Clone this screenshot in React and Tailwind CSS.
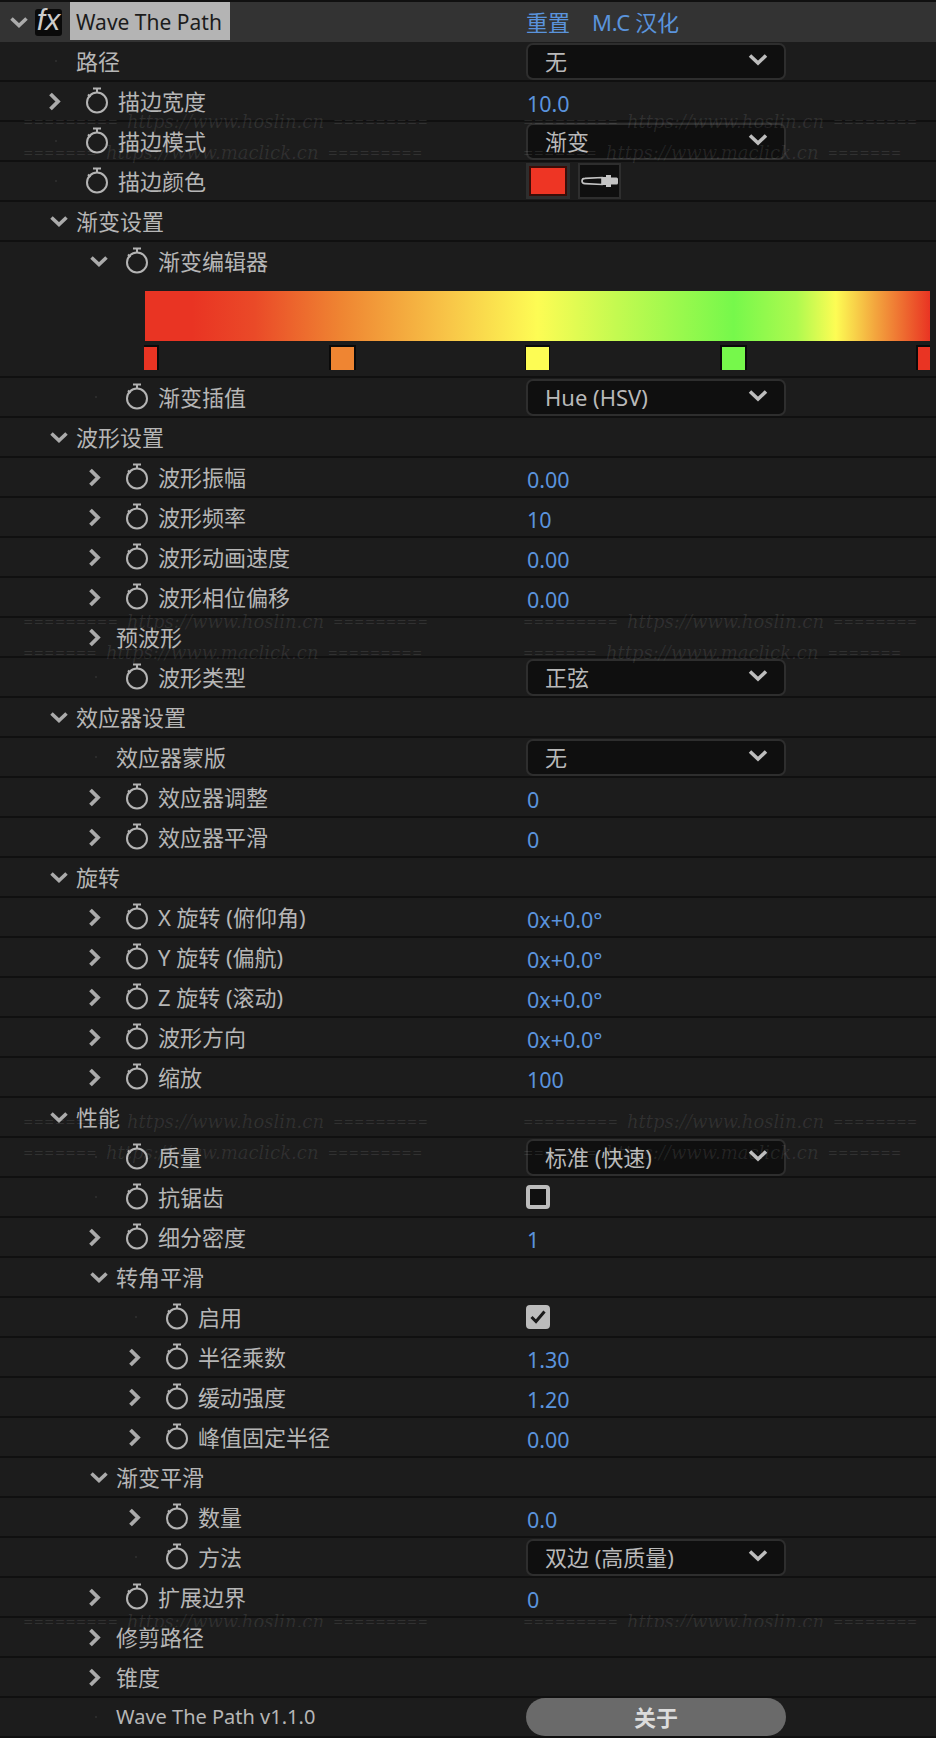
const FONT = "font-['Noto_Sans','Noto_Sans_CJK_SC',sans-serif]";

const Watch = () => (
  <svg width="24" height="28" viewBox="0 0 24 28" fill="none" stroke="#b4b4b4" strokeWidth="2" className="shrink-0">
    <circle cx="12" cy="16.5" r="10" />
    <path d="M8 2.5h8M12 2.5v4M3 8.5l2.5 2.5" />
  </svg>
);

const ChevDown = ({ big }) => (
  <svg width="20" height="13" viewBox="0 0 20 13" fill="none" stroke={big ? "#bdbdbd" : "#ababab"} strokeWidth="3.6">
    <path d={big ? "M2 2.5l8 7.5 8-7.5" : "M2.5 2.5l7.5 7 7.5-7"} />
  </svg>
);

const ChevRight = () => (
  <svg width="13" height="19" viewBox="0 0 13 19" fill="none" stroke="#ababab" strokeWidth="3.8">
    <path d="M2.5 2l7.5 7.5-7.5 7.5" />
  </svg>
);

const Slot = ({ chev }) => (
  <div className="w-[32px] shrink-0 flex items-center">
    {chev === "down" && <div className="ml-[5px]"><ChevDown /></div>}
    {chev === "right" && <div className="ml-[4px]"><ChevRight /></div>}
    {!chev && <div className="ml-[11px] w-[2px] h-[2px] bg-[#2b2b2b]" />}
  </div>
);

const Label = ({ level, chev, watch, small, children }) => {
  const pad = ["pl-[44px]", "pl-[84px]", "pl-[124px]"][level];
  return (
    <div className={`w-[526px] shrink-0 flex items-center ${pad}`}>
      <Slot chev={chev} />
      {watch && <div className="w-[42px] shrink-0 pl-[9px] flex items-center -mt-[3px]"><Watch /></div>}
      <span className={`${small ? "text-[20px]" : "text-[22px]"} leading-none text-[#b6b6b6] whitespace-nowrap`}>{children}</span>
    </div>
  );
};

const Row = ({ children }) => (
  <div className="h-[40px] flex items-center border-b-2 border-[#101010] bg-[#1c1c1c]">{children}</div>
);

const Value = ({ children }) => (
  <span className="pl-[1px] mt-[6px] text-[21.5px] leading-none text-[#5a93dc]">{children}</span>
);

const Select = ({ children }) => (
  <div className="w-[260px] h-[37px] flex items-center justify-between pl-[17px] pr-[16px] rounded-[7px] bg-[#0f0f0f] border-2 border-[#2e2e2e]">
    <span className="text-[22px] leading-none text-[#b9b9b9] whitespace-nowrap">{children}</span>
    <div className="-mt-[3px]"><ChevDown big /></div>
  </div>
);

const Check = ({ on }) => (
  <div className={`w-[24px] h-[24px] rounded-[4px] border-[4px] border-[#bcbcbc] flex items-center justify-center ${on ? "bg-[#bcbcbc]" : "bg-[#101010]"}`}>
    {on && (
      <svg width="16" height="14" viewBox="0 0 16 14" fill="none" stroke="#1a1a1a" strokeWidth="3">
        <path d="M1.5 7l4.5 4.5L14.5 1.5" />
      </svg>
    )}
  </div>
);

const Marker = ({ cls }) => <div className={`h-[25px] ${cls}`} />;

const WLine = ({ l, url, r, cls }) => (
  <div className={`h-[24px] flex items-center gap-[9px] whitespace-nowrap text-white/[0.09] italic font-['DejaVu_Serif',serif] ${cls || ""}`}>
    <span className="text-[12.6px] leading-none not-italic">{l}</span>
    <span className="text-[18px] leading-none">{url}</span>
    <span className="text-[12.6px] leading-none not-italic">{r}</span>
  </div>
);

const Watermark = ({ top, clip }) => (
  <>
    <div className={`absolute left-[23px] pointer-events-none ${top} ${clip ? "h-[17px] overflow-hidden" : ""}`}>
      <WLine l="=========" url="https://www.hoslin.cn" r="=========" />
      {!clip && <WLine cls="mt-[7px]" l="=======" url="https://www.maclick.cn" r="=========" />}
    </div>
    <div className={`absolute left-[523px] pointer-events-none ${top} ${clip ? "h-[17px] overflow-hidden" : ""}`}>
      <WLine l="=========" url="https://www.hoslin.cn" r="========" />
      {!clip && <WLine cls="mt-[7px]" l="=======" url="https://www.maclick.cn" r="=======" />}
    </div>
  </>
);

export default function App() {
  return (
    <div className={`relative w-[936px] h-[1738px] overflow-hidden bg-[#101010] pt-[2px] ${FONT}`}>
      <div className="h-[40px] flex items-center bg-[#333333]">
        <div className="w-[526px] shrink-0 flex items-center pl-[9px]">
          <ChevDown />
          <div className="ml-[6px] w-[27px] h-[27px] rounded-[3px] bg-[#0a0a0a] flex items-center justify-center">
            <span className="text-[30px] leading-none italic text-[#cccccc] font-['Liberation_Sans',sans-serif] font-light -mt-[4px]">fx</span>
          </div>
          <div className="ml-[8px] w-[160px] h-[38px] -mt-[2px] bg-[#b4b4b4] flex items-center pl-[6px] pt-[2px]">
            <span className="text-[21px] leading-none text-[#1c1c1c] whitespace-nowrap">Wave The Path</span>
          </div>
        </div>
        <span className="text-[22px] leading-none text-[#5a93dc]">重置</span>
        <span className="ml-[22px] text-[22px] leading-none tracking-[-0.3px] text-[#5a93dc]">M.C 汉化</span>
      </div>

      <Row><Label level={0}>路径</Label><Select>无</Select></Row>
      <Row><Label level={0} chev="right" watch>描边宽度</Label><Value>10.0</Value></Row>
      <Row><Label level={0} watch>描边模式</Label><Select>渐变</Select></Row>
      <Row>
        <Label level={0} watch>描边颜色</Label>
        <div className="w-[44px] h-[36px] bg-[#2e2e2e] p-[3px]">
          <div className="w-full h-full bg-[#ee3524] border-2 border-[#3a0d08]" />
        </div>
        <div className="ml-[8px] w-[43px] h-[36px] bg-[#0f0f0f] border-2 border-[#2e2e2e] flex items-center justify-center">
          <svg width="38" height="14" viewBox="0 0 38 14" fill="none">
            <path d="M1 7c0-1.6 1.5-2.6 3-2.6L21 3.5v7L4 9.6C2.5 9.6 1 8.6 1 7z" stroke="#c4c4c4" strokeWidth="1.6" />
            <path d="M21 3h4V1h5v2.5h5.5a1.5 1.5 0 0 1 1.5 1.5v4a1.5 1.5 0 0 1-1.5 1.5H30V13h-5v-2h-4z" fill="#c4c4c4" />
          </svg>
        </div>
      </Row>
      <Row><Label level={0} chev="down">渐变设置</Label></Row>

      <div className="h-[136px] border-b-2 border-[#101010] bg-[#1c1c1c]">
        <div className="h-[38px] flex items-center"><Label level={1} chev="down" watch>渐变编辑器</Label></div>
        <div className="ml-[145px] mt-[11px] w-[785px] h-[50px] bg-[linear-gradient(to_right,#e93423_0%,#e93423_6%,#ea4a28_14%,#ef8532_25%,#f8c748_39%,#fdfc54_50%,#c4fa50_60%,#76f84b_75%,#aefa4f_83%,#fdfc54_88%,#f3a63e_93%,#e93423_100%)]" />
        <div className="ml-[144px] mt-[4px] w-[786px] flex justify-between">
          <Marker cls="w-[15px] bg-[#e93423] border-t-2 border-r-2 border-[#0a0a0a]" />
          <Marker cls="w-[27px] bg-[#ef8532] border-2 border-b-0 border-[#0a0a0a]" />
          <Marker cls="w-[25px] bg-[#fdfc54] border-t-2 border-l border-r border-[#0a0a0a]" />
          <Marker cls="w-[27px] bg-[#76f84b] border-2 border-b-0 border-[#0a0a0a]" />
          <Marker cls="w-[14px] bg-[#e93423] border-t-2 border-l-2 border-[#0a0a0a]" />
        </div>
      </div>

      <Row><Label level={1} watch>渐变插值</Label><Select>Hue (HSV)</Select></Row>
      <Row><Label level={0} chev="down">波形设置</Label></Row>
      <Row><Label level={1} chev="right" watch>波形振幅</Label><Value>0.00</Value></Row>
      <Row><Label level={1} chev="right" watch>波形频率</Label><Value>10</Value></Row>
      <Row><Label level={1} chev="right" watch>波形动画速度</Label><Value>0.00</Value></Row>
      <Row><Label level={1} chev="right" watch>波形相位偏移</Label><Value>0.00</Value></Row>
      <Row><Label level={1} chev="right">预波形</Label></Row>
      <Row><Label level={1} watch>波形类型</Label><Select>正弦</Select></Row>
      <Row><Label level={0} chev="down">效应器设置</Label></Row>
      <Row><Label level={1}>效应器蒙版</Label><Select>无</Select></Row>
      <Row><Label level={1} chev="right" watch>效应器调整</Label><Value>0</Value></Row>
      <Row><Label level={1} chev="right" watch>效应器平滑</Label><Value>0</Value></Row>
      <Row><Label level={0} chev="down">旋转</Label></Row>
      <Row><Label level={1} chev="right" watch>X 旋转 (俯仰角)</Label><Value>0x+0.0°</Value></Row>
      <Row><Label level={1} chev="right" watch>Y 旋转 (偏航)</Label><Value>0x+0.0°</Value></Row>
      <Row><Label level={1} chev="right" watch>Z 旋转 (滚动)</Label><Value>0x+0.0°</Value></Row>
      <Row><Label level={1} chev="right" watch>波形方向</Label><Value>0x+0.0°</Value></Row>
      <Row><Label level={1} chev="right" watch>缩放</Label><Value>100</Value></Row>
      <Row><Label level={0} chev="down">性能</Label></Row>
      <Row><Label level={1} watch>质量</Label><Select>标准 (快速)</Select></Row>
      <Row><Label level={1} watch>抗锯齿</Label><Check /></Row>
      <Row><Label level={1} chev="right" watch>细分密度</Label><Value>1</Value></Row>
      <Row><Label level={1} chev="down">转角平滑</Label></Row>
      <Row><Label level={2} watch>启用</Label><Check on /></Row>
      <Row><Label level={2} chev="right" watch>半径乘数</Label><Value>1.30</Value></Row>
      <Row><Label level={2} chev="right" watch>缓动强度</Label><Value>1.20</Value></Row>
      <Row><Label level={2} chev="right" watch>峰值固定半径</Label><Value>0.00</Value></Row>
      <Row><Label level={1} chev="down">渐变平滑</Label></Row>
      <Row><Label level={2} chev="right" watch>数量</Label><Value>0.0</Value></Row>
      <Row><Label level={2} watch>方法</Label><Select>双边 (高质量)</Select></Row>
      <Row><Label level={1} chev="right" watch>扩展边界</Label><Value>0</Value></Row>
      <Row><Label level={1} chev="right">修剪路径</Label></Row>
      <Row><Label level={1} chev="right">锥度</Label></Row>
      <Row>
        <Label level={1} small>Wave The Path v1.1.0</Label>
        <div className="w-[260px] h-[38px] rounded-full bg-[#6a6a6a] flex items-center justify-center">
          <span className="text-[22px] leading-none font-bold text-[#dcdcdc]">关于</span>
        </div>
      </Row>

      <Watermark top="top-[110px]" />
      <Watermark top="top-[610px]" />
      <Watermark top="top-[1110px]" />
      <Watermark top="top-[1610px]" clip />
    </div>
  );
}
